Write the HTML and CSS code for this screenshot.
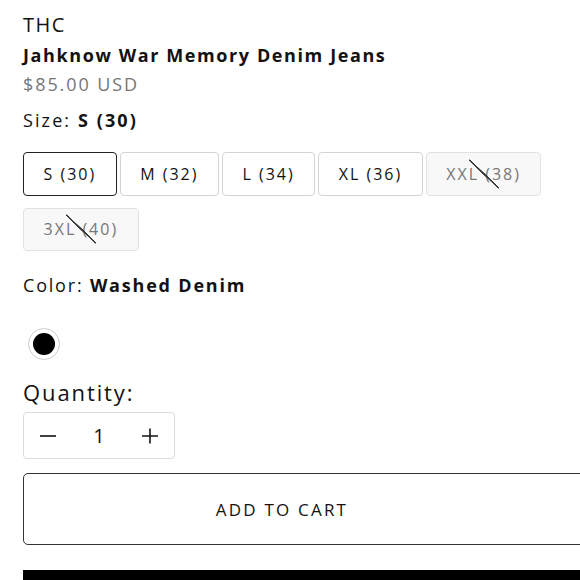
FILE: index.html
```html
<!DOCTYPE html>
<html lang="en">
<head>
<meta charset="utf-8">
<title>Jahknow War Memory Denim Jeans</title>
<link rel="stylesheet" href="styles.css">
</head>
<body>
<main class="product">
  <p class="vendor">THC</p>
  <h1 class="title">Jahknow War Memory Denim Jeans</h1>
  <p class="price">$85.00 USD</p>

  <p class="label size-label">Size: <strong>S (30)</strong></p>
  <div class="sizes">
    <button class="size selected">S (30)</button>
    <button class="size">M (32)</button>
    <button class="size">L (34)</button>
    <button class="size">XL (36)</button>
    <button class="size disabled">XXL (38)</button>
    <button class="size disabled">3XL (40)</button>
  </div>

  <p class="label color-label">Color: <strong>Washed Denim</strong></p>
  <div class="swatches">
    <span class="swatch"><span class="swatch-dot"></span></span>
  </div>

  <p class="qty-label">Quantity:</p>
  <div class="qty">
    <span class="qty-btn">
      <svg width="18" height="18" viewBox="0 0 18 18"><path d="M1 9h16" stroke="#121212" stroke-width="1.6"/></svg>
    </span>
    <span class="qty-value">1</span>
    <span class="qty-btn">
      <svg width="18" height="18" viewBox="0 0 18 18"><path d="M1 9h16M9 1.5v15" stroke="#121212" stroke-width="1.6"/></svg>
    </span>
  </div>

  <button class="add-to-cart">ADD TO CART</button>
  <div class="buy-now"></div>
</main>
</body>
</html>
```
FILE: styles.css
```css
html, body {
  margin: 0;
  padding: 0;
  background: #fff;
  overflow: hidden;
}

.product {
  padding: 12px 0 0 23px;
  font-family: "Open Sans", Lato, sans-serif;
  color: #121212;
}

.product p, .product h1 {
  margin: 0;
}

.vendor {
  font-size: 20px;
  line-height: 25px;
  font-weight: 400;
  letter-spacing: 1.5px;
}

.title {
  margin-top: 6px !important;
  font-size: 18px;
  line-height: 24px;
  font-weight: 700;
  letter-spacing: 1.6px;
}

.price {
  margin-top: 5px !important;
  font-size: 18px;
  line-height: 24px;
  color: #777;
  letter-spacing: 1.9px;
}

.label {
  font-size: 18px;
  line-height: 24px;
}

.size-label {
  margin-top: 12px !important;
  letter-spacing: 2.1px;
}

.label strong {
  font-weight: 700;
}

.sizes {
  margin-top: 20px;
  display: flex;
  flex-wrap: wrap;
  column-gap: 3px;
  row-gap: 12px;
  width: 540px;
}

.size {
  position: relative;
  height: 43.5px;
  padding: 0 19.5px;
  border: 1px solid #d4d4d4;
  border-radius: 4px;
  background: #fff;
  font-family: inherit;
  font-size: 16px;
  letter-spacing: 2px;
  color: #121212;
}

.size.selected {
  border: 1.5px solid #222;
}

.size.disabled {
  background: #f8f8f8;
  border-color: #e2e2e2;
  color: #777;
}

.size.disabled::after {
  content: "";
  position: absolute;
  left: 50%;
  top: 50%;
  width: 30px;
  height: 29px;
  transform: translate(-50%, -50%);
  background: linear-gradient(to top right, transparent calc(50% - 0.9px), #3a3a3a calc(50% - 0.7px), #3a3a3a calc(50% + 0.7px), transparent calc(50% + 0.9px));
}

.color-label {
  margin-top: 22px !important;
  letter-spacing: 1.8px;
}

.swatches {
  margin-top: 31px;
  padding-left: 5px;
  display: flex;
}

.swatch {
  width: 32px;
  height: 32px;
  box-sizing: border-box;
  border: 1.5px solid #cfcfcf;
  border-radius: 50%;
  display: flex;
  align-items: center;
  justify-content: center;
}

.swatch-dot {
  width: 22px;
  height: 22px;
  border-radius: 50%;
  background: #000;
}

.qty-label {
  margin-top: 18px !important;
  font-size: 22px;
  line-height: 28px;
  letter-spacing: 1.9px;
}

.qty {
  margin-top: 6px;
  width: 152px;
  height: 47px;
  box-sizing: border-box;
  border: 1px solid #dcdcdc;
  border-radius: 4px;
  display: flex;
  align-items: center;
  justify-content: space-between;
  padding: 0 14px 0 14px;
}

.qty-btn {
  display: flex;
  width: 20px;
  justify-content: center;
}

.qty-value {
  font-size: 20px;
}

.add-to-cart {
  display: block;
  margin-top: 14px;
  width: 620px;
  height: 72px;
  box-sizing: border-box;
  padding: 0 102px 0 0;
  border: 1.5px solid #333;
  border-radius: 5px;
  background: #fff;
  font-family: inherit;
  font-size: 17px;
  letter-spacing: 2.2px;
  color: #121212;
}

.buy-now {
  margin-top: 25px;
  width: 620px;
  height: 60px;
  background: #000;
}
```
